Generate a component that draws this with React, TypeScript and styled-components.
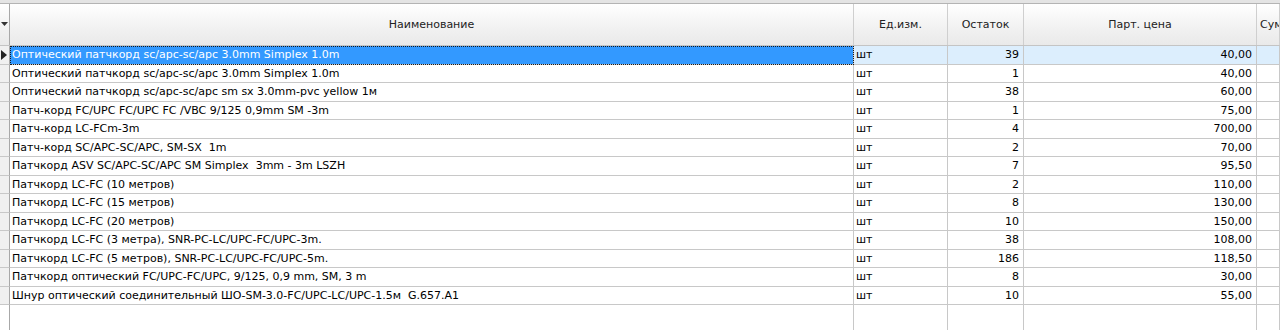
import React from 'react'
import styled, { createGlobalStyle } from 'styled-components'

const GlobalStyle = createGlobalStyle`
  html, body {
    margin: 0;
    padding: 0;
    background: #fff;
    overflow: hidden;
  }
  body {
    font-family: "DejaVu Sans", Tahoma, sans-serif;
    font-size: 11px;
    color: #000;
  }
`

const COLS = '10px 844px 94px 76px 233px 1fr'

const Grid = styled.div`
  width: 1280px;
  height: 330px;
  display: flex;
  flex-direction: column;
  background: #fff;
`

const TopStrip = styled.div`
  height: 3px;
  background: #e4e4e4;
  border-bottom: 1px solid #b4b4b4;
`

const HeaderRow = styled.div`
  display: grid;
  grid-template-columns: ${COLS};
  height: 42px;
  box-sizing: border-box;
  border-bottom: 1px solid #c4c4c4;
  background: linear-gradient(#ffffff, #f1f1f1 60%, #e9e9e9);
`

const HeadCell = styled.div<{ $left?: boolean }>`
  display: flex;
  align-items: center;
  justify-content: ${p => (p.$left ? 'flex-start' : 'center')};
  padding-left: ${p => (p.$left ? '3px' : '0')};
  border-right: 1px solid #cfcfcf;
  color: #222;
  white-space: nowrap;
  overflow: hidden;
`

const Corner = styled.div`
  border-right: 1px solid #a8a8a8;
  display: flex;
  align-items: center;
  justify-content: center;
`

const Row = styled.div<{ $selected?: boolean }>`
  display: grid;
  grid-template-columns: ${COLS};
  height: 18.5px;
  box-sizing: border-box;
  background: ${p => (p.$selected ? '#dceefd' : '#fff')};
`

const Indicator = styled.div`
  border-right: 1px solid #a8a8a8;
  border-bottom: 1px solid #c8c8c8;
  background: #f0f0f0;
  display: flex;
  align-items: center;
  justify-content: center;
`

const Cell = styled.div<{ $right?: boolean; $focus?: boolean }>`
  box-sizing: border-box;
  border-right: 1px solid #c8c8c8;
  border-bottom: 1px solid #c8c8c8;
  padding: 0 ${p => (p.$right ? '4px' : '2px')};
  display: flex;
  align-items: center;
  justify-content: ${p => (p.$right ? 'flex-end' : 'flex-start')};
  white-space: pre;
  overflow: hidden;
  ${p =>
    p.$focus &&
    `
    background: #3399ff;
    color: #fff;
    outline: 1px dotted #1a1a1a;
    outline-offset: -1px;
  `}
`

const Filler = styled.div`
  flex: 1;
  display: grid;
  grid-template-columns: ${COLS};
`

const FillCell = styled.div<{ $dark?: boolean }>`
  border-right: 1px solid ${p => (p.$dark ? '#a8a8a8' : '#c8c8c8')};
`

type Item = { name: string; unit: string; rest: number; price: string }

const items: Item[] = [
  { name: 'Оптический патчкорд sc/apc-sc/apc 3.0mm Simplex 1.0m', unit: 'шт', rest: 39, price: '40,00' },
  { name: 'Оптический патчкорд sc/apc-sc/apc 3.0mm Simplex 1.0m', unit: 'шт', rest: 1, price: '40,00' },
  { name: 'Оптический патчкорд sc/apc-sc/apc sm sx 3.0mm-pvc yellow 1м', unit: 'шт', rest: 38, price: '60,00' },
  { name: 'Патч-корд FC/UPC FC/UPC FC /VBC 9/125 0,9mm SM -3m', unit: 'шт', rest: 1, price: '75,00' },
  { name: 'Патч-корд LC-FCm-3m', unit: 'шт', rest: 4, price: '700,00' },
  { name: 'Патч-корд SC/APC-SC/APC, SM-SX  1m', unit: 'шт', rest: 2, price: '70,00' },
  { name: 'Патчкорд ASV SC/APC-SC/APC SM Simplex  3mm - 3m LSZH', unit: 'шт', rest: 7, price: '95,50' },
  { name: 'Патчкорд LC-FC (10 метров)', unit: 'шт', rest: 2, price: '110,00' },
  { name: 'Патчкорд LC-FC (15 метров)', unit: 'шт', rest: 8, price: '130,00' },
  { name: 'Патчкорд LC-FC (20 метров)', unit: 'шт', rest: 10, price: '150,00' },
  { name: 'Патчкорд LC-FC (3 метра), SNR-PC-LC/UPC-FC/UPC-3m.', unit: 'шт', rest: 38, price: '108,00' },
  { name: 'Патчкорд LC-FC (5 метров), SNR-PC-LC/UPC-FC/UPC-5m.', unit: 'шт', rest: 186, price: '118,50' },
  { name: 'Патчкорд оптический FC/UPC-FC/UPC, 9/125, 0,9 mm, SM, 3 m', unit: 'шт', rest: 8, price: '30,00' },
  { name: 'Шнур оптический соединительный ШО-SM-3.0-FC/UPC-LC/UPC-1.5м  G.657.A1', unit: 'шт', rest: 10, price: '55,00' },
]

const DropArrow = () => (
  <svg width="8" height="5" viewBox="0 0 8 5">
    <path d="M0 0 H7 L3.5 4 Z" fill="#333" />
  </svg>
)

const RowArrow = () => (
  <svg width="7" height="10" viewBox="0 0 7 10">
    <path d="M0 0 L6 5 L0 10 Z" fill="#222" />
  </svg>
)

export default function App() {
  return (
    <>
      <GlobalStyle />
      <Grid>
        <TopStrip />
        <HeaderRow>
          <Corner>
            <DropArrow />
          </Corner>
          <HeadCell>Наименование</HeadCell>
          <HeadCell>Ед.изм.</HeadCell>
          <HeadCell>Остаток</HeadCell>
          <HeadCell>Парт. цена</HeadCell>
          <HeadCell $left>Сум</HeadCell>
        </HeaderRow>
        {items.map((it, i) => (
          <Row key={i} $selected={i === 0}>
            <Indicator>{i === 0 && <RowArrow />}</Indicator>
            <Cell $focus={i === 0}>{it.name}</Cell>
            <Cell>{it.unit}</Cell>
            <Cell $right>{it.rest}</Cell>
            <Cell $right>{it.price}</Cell>
            <Cell />
          </Row>
        ))}
        <Filler>
          <FillCell $dark />
          <FillCell />
          <FillCell />
          <FillCell />
          <FillCell />
          <FillCell />
        </Filler>
      </Grid>
    </>
  )
}
